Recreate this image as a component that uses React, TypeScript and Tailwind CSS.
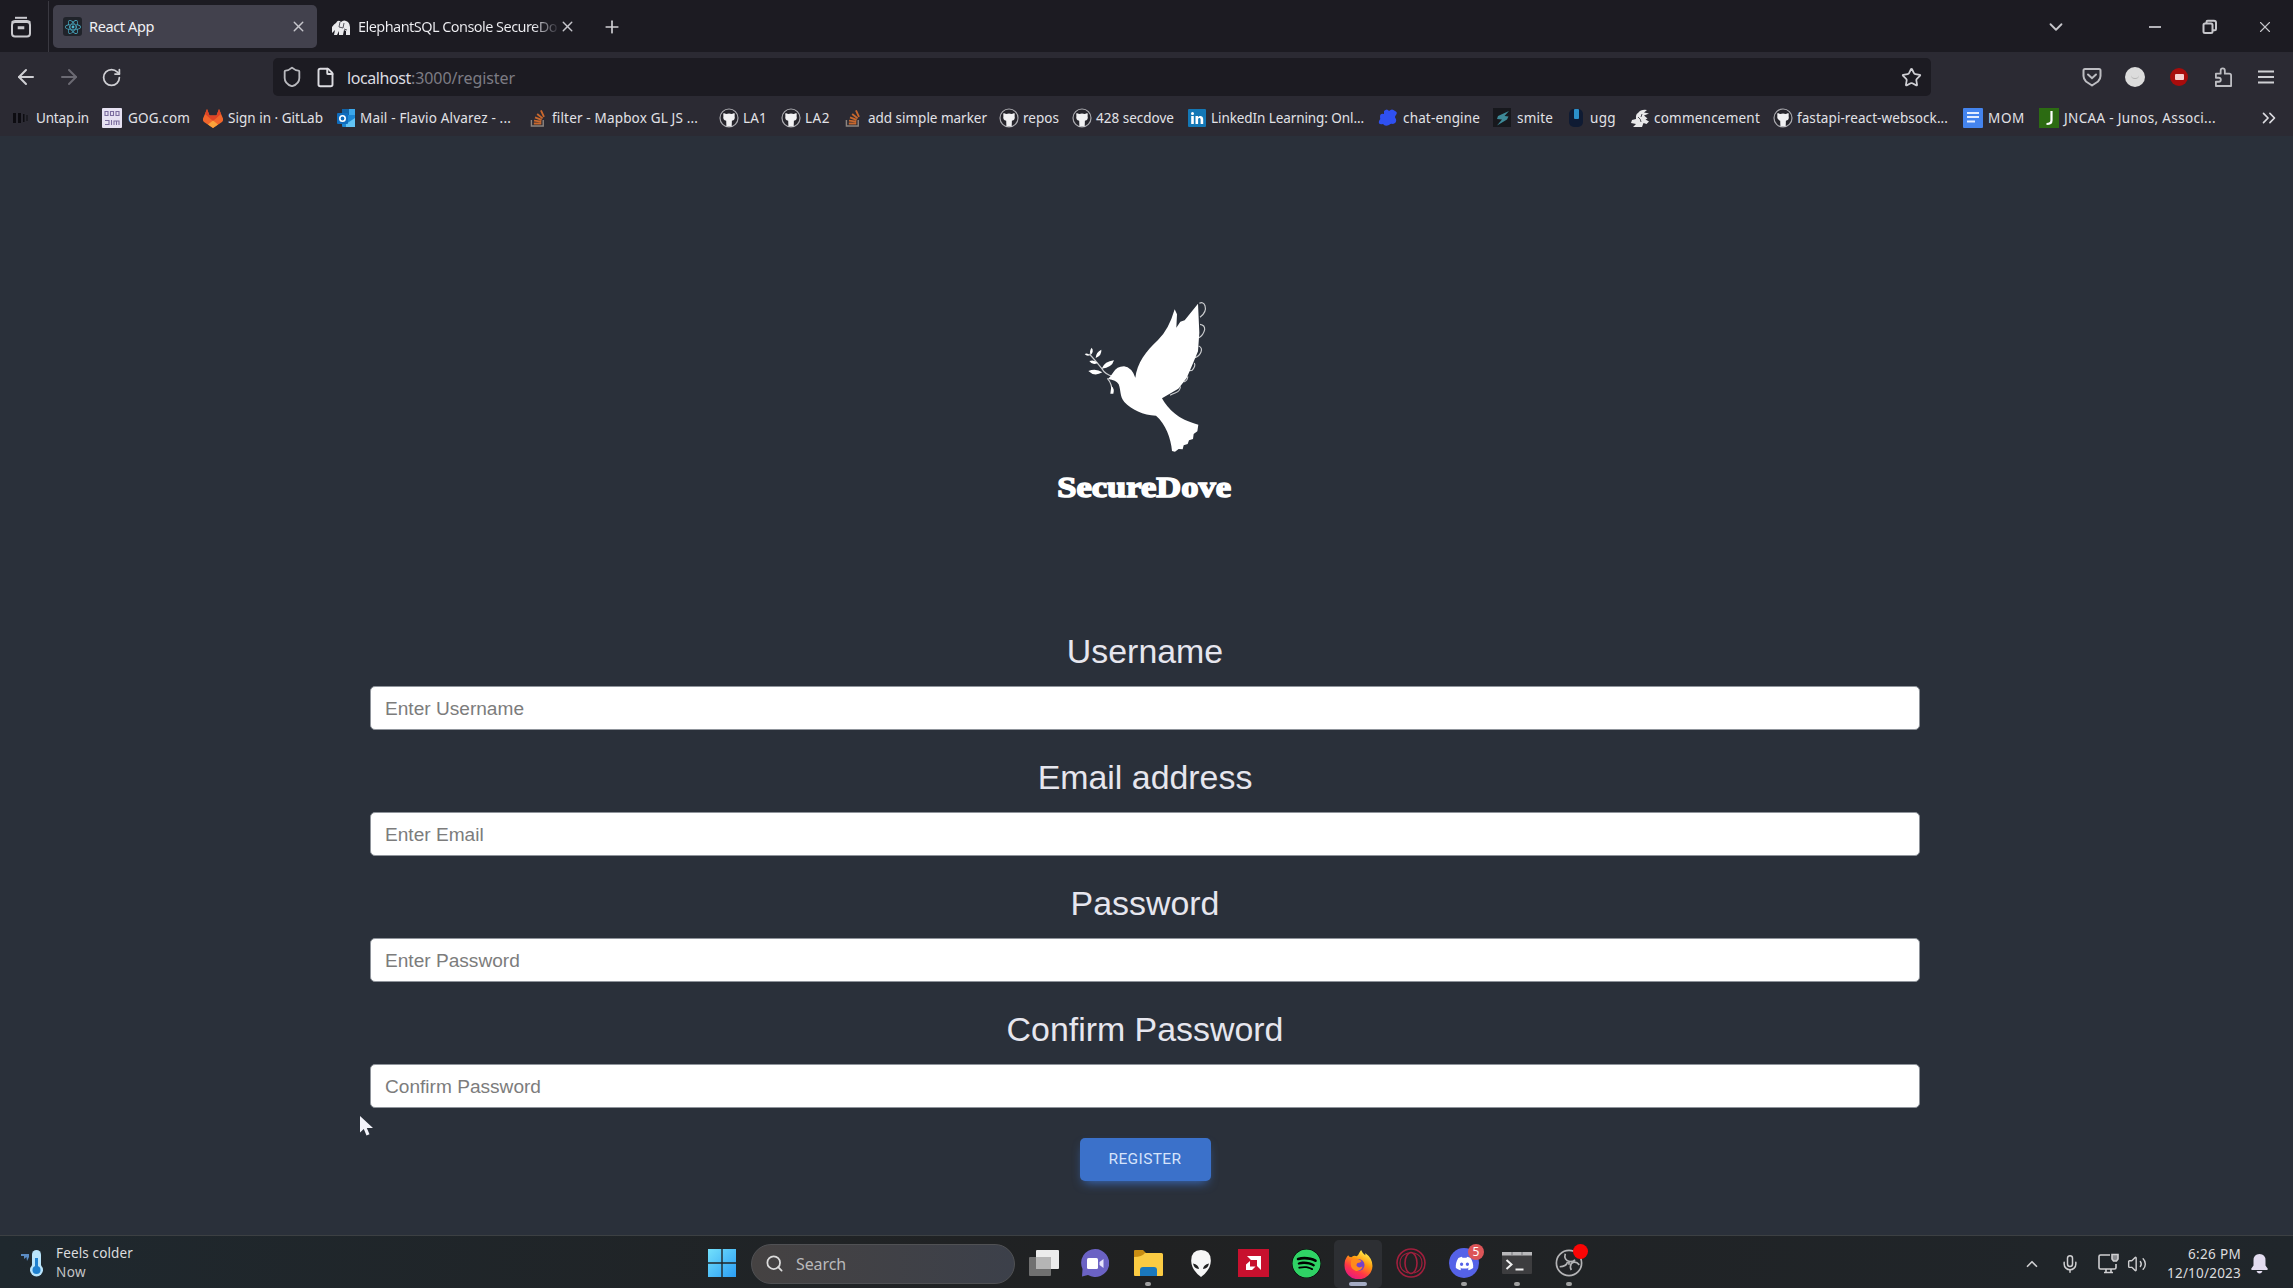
import React, { useLayoutEffect, useRef } from "react";
import { FaReact, FaSpotify, FaDiscord } from "react-icons/fa";
import { ArrowLeft, ArrowRight, RotateCw, Star, ChevronDown, ChevronUp, ChevronsRight, X, Plus, Search, Mic, Volume2, Shield, File } from "lucide-react";

/** Single line of text whose tracking is adjusted so that it spans `w` pixels. */
function Fit({ w, children, className = "" }: { w: number; children: string; className?: string }) {
  const ref = useRef<HTMLSpanElement>(null);
  useLayoutEffect(() => {
    const el = ref.current;
    if (!el) return;
    el.style.letterSpacing = "0px";
    const natural = el.getBoundingClientRect().width;
    el.style.letterSpacing = `${(w - natural) / children.length}px`;
  }, [w, children]);
  return (
    <span ref={ref} className={`inline-block shrink-0 whitespace-pre ${className}`}>
      {children}
    </span>
  );
}

const Github = () => (
  <svg viewBox="0 0 20 20" className="size-5">
    <circle cx="10" cy="10" r="9" fill="#26252c" stroke="#a9a9ae" strokeWidth="1.2" />
    <path d="M4.6 5l2.6.9q2.800-.7 5.600 0L15.400 5q.6 1.600.2 2.900 1 3.900-2.700 4.900l-.2 5.800H7.400l-.2-5.800q-3.700-1-2.800-4.900-.4-1.300.2-2.900z" fill="#f1f1f3" />
  </svg>
);
const Gitlab = () => (
  <svg viewBox="0 0 20 20" className="size-5">
    <path d="M4 1l2.500 6.500h7L16 1l4 9.500q.5 2-1 3.500l-9 6-9-6q-1.500-1.500-1-3.500z" fill="#f0652b" />
    <path d="M4 1l2.500 6.500h7L16 1l2 5-8 7-8-7z" fill="#dc4326" />
    <path d="M10 12.500l5 4-5 3.500-5-3.500z" fill="#fba33a" />
  </svg>
);
const Stack = () => (
  <svg viewBox="0 0 18 20" className="h-5 w-[17px]" fill="none">
    <path d="M1.500 12v6.500h12.500V12" stroke="#8d8580" strokeWidth="1.500" />
    <path d="M4 15.800h8M4.200 12.800l7.800 1M5.300 9.300l7 2.800M7.600 5.700l5.800 4.700M11.600 2l3.200 6.800" stroke="#c9682e" strokeWidth="2" />
  </svg>
);
const Untap = () => (
  <svg viewBox="0 0 18 20" className="h-5 w-[18px]">
    <path d="M1 5h3v10H1zM6 5h3v10H6zM11 6h1.500v8H11zM14.500 7h1v6h-1z" fill="#0d0c11" />
  </svg>
);
const Gog = () => (
  <svg viewBox="0 0 20 20" className="size-5">
    <rect width="20" height="20" rx="1" fill="#e6e1f2" />
    <path d="M3 3.500h3v4H3zM8.500 3.500h3v4h-3zM14 3.500h3v4h-3zM3 12.500h4v4H3M9.500 12v5M12 17v-4h5v4M14.500 13v4" fill="none" stroke="#7a6c9e" strokeWidth="1.100" />
  </svg>
);
const Outlook = () => (
  <svg viewBox="0 0 19 20" className="h-5 w-[19px]">
    <rect x="5" y="1" width="13" height="18" rx="1" fill="#1b86d3" />
    <path d="M5 1h7v6H5z" fill="#1163a8" />
    <path d="M12 1h6v6h-6z" fill="#3ba7ea" />
    <path d="M18 10l-9 6v3h9z" fill="#62c4f5" />
    <rect y="5" width="11" height="11" rx="1" fill="#0f6cbd" />
    <circle cx="5.500" cy="10.500" r="2.700" fill="none" stroke="#fff" strokeWidth="1.600" />
  </svg>
);
const Linkedin = () => (
  <svg viewBox="0 0 18 18" className="size-[18px]">
    <rect width="18" height="18" rx="1" fill="#1377b5" />
    <circle cx="4.500" cy="4.500" r="1.500" fill="#fff" />
    <path d="M3.200 7h2.600v8H3.200zM7.500 7H10v1.200c1.500-2.200 5.200-1.700 5.200 1.900V15h-2.600v-4.400c0-2-2.500-2-2.500 0V15H7.500z" fill="#fff" />
  </svg>
);
const ChatEngine = () => (
  <svg viewBox="0 0 20 20" className="size-5">
    <path d="M6 3q3-3 5 0 3-3 6 0 3 1 1 4-2 2 0 4 1 4-3 5-2-1-4 1-4 2-6-1-5 1-4-3 2-2 1-4 0-4 4-3z" fill="#2f50f0" />
  </svg>
);
const Smite = () => (
  <svg viewBox="0 0 18 20" className="h-5 w-[18px]">
    <rect width="18" height="19" fill="#17181d" />
    <path d="M16 3L5 8l-1 3 5 .5-5 6 10-6 1.500-3-4-.5z" fill="#3e8a98" />
  </svg>
);
const Ugg = () => (
  <svg viewBox="0 0 16 20" className="h-5 w-4">
    <rect x="1" y="1" width="14" height="18" rx="5" fill="#0f1b33" />
    <rect x="6" y="1" width="5" height="10" rx="1" fill="#2b8fc9" />
  </svg>
);
const Horse = () => (
  <svg viewBox="0 0 20 20" className="size-5">
    <path d="M8 5q3-4 9-3l-3 2.500 5 1-5 2 3.500 3-2 1 3.500 2-2.500 2.500-3-1-1.500 4H3l3-3-5-1 1-3 4-1q-.500-5 2-6z" fill="#e8e8ea" />
    <path d="M8 9q3 2 3 5M12 6l-1 3" stroke="#4b4a52" fill="none" />
  </svg>
);
const Docs = () => (
  <svg viewBox="0 0 20 20" className="size-5">
    <rect width="20" height="20" rx="1" fill="#4484ee" />
    <path d="M4 5h12M4 9h12M4 13.500h8" stroke="#e4edff" strokeWidth="2" />
  </svg>
);
const Juniper = () => (
  <svg viewBox="0 0 20 20" className="size-5">
    <rect width="20" height="20" fill="#2c6b12" />
    <path d="M12.500 3v9.500q0 3.500-5 3.500" fill="none" stroke="#fff" strokeWidth="2.200" />
  </svg>
);

const BOOKMARKS: { label: string; slot: string; lead: string; w: number; Icon: React.FC }[] = [
  { label: "Untap.in", slot: "w-[90px]", lead: "w-6", w: 53, Icon: Untap },
  { label: "GOG.com", slot: "w-[101px]", lead: "w-[26px]", w: 62, Icon: Gog },
  { label: "Sign in · GitLab", slot: "w-[134px]", lead: "w-[25px]", w: 95, Icon: Gitlab },
  { label: "Mail - Flavio Alvarez - ...", slot: "w-[193px]", lead: "w-[23px]", w: 151, Icon: Outlook },
  { label: "filter - Mapbox GL JS ...", slot: "w-[189px]", lead: "w-[22px]", w: 146, Icon: Stack },
  { label: "LA1", slot: "w-[62px]", lead: "w-6", w: 24, Icon: Github },
  { label: "LA2", slot: "w-16", lead: "w-6", w: 25, Icon: Github },
  { label: "add simple marker", slot: "w-[154px]", lead: "w-[23px]", w: 119, Icon: Stack },
  { label: "repos", slot: "w-[73px]", lead: "w-6", w: 36, Icon: Github },
  { label: "428 secdove", slot: "w-[116px]", lead: "w-6", w: 78, Icon: Github },
  { label: "LinkedIn Learning: Onl...", slot: "w-[190px]", lead: "w-[23px]", w: 153, Icon: Linkedin },
  { label: "chat-engine", slot: "w-[115px]", lead: "w-[25px]", w: 77, Icon: ChatEngine },
  { label: "smite", slot: "w-[75px]", lead: "w-6", w: 36, Icon: Smite },
  { label: "ugg", slot: "w-[62px]", lead: "w-[22px]", w: 26, Icon: Ugg },
  { label: "commencement", slot: "w-[143px]", lead: "w-6", w: 106, Icon: Horse },
  { label: "fastapi-react-websock...", slot: "w-[190px]", lead: "w-6", w: 151, Icon: Github },
  { label: "MOM", slot: "w-[76px]", lead: "w-[25px]", w: 37, Icon: Docs },
  { label: "JNCAA - Junos, Associ...", slot: "w-[219px]", lead: "w-[25px]", w: 152, Icon: Juniper },
];

function TabStrip() {
  return (
    <div className="flex h-[52px] items-center bg-[#1c1b22] pt-px text-[14.5px] text-[#f0f0f4]">
      <div className="flex h-full w-[49px] items-center border-r border-[#3a3941] pl-[10px]">
        <svg viewBox="0 0 22 22" className="size-[22px]" fill="none" stroke="#c9c9ce" strokeWidth="2">
          <path d="M5 1.800h12" />
          <rect x="2" y="6" width="18" height="14.500" rx="3" />
          <path d="M1.500 6.500Q3 4.800 5 4.800h12q2 0 3.500 1.700M8.500 11h5v1.500h-5z" strokeWidth="1.600" />
        </svg>
      </div>
      <div className="ml-1 flex h-[43px] w-[264px] items-center rounded-[5px] bg-[#42414d] pl-[10px]">
        <span className="flex size-[19px] items-center justify-center rounded-[3px] bg-[#20232a]">
          <FaReact className="size-4 text-[#4bb4cd]" />
        </span>
        <Fit w={65} className="ml-[7px]">React App</Fit>
        <X className="ml-auto mr-[10px] size-[17px] text-[#c6c6cc]" strokeWidth={2} />
      </div>
      <div className="ml-[14px] flex w-[246px] items-center">
        <svg viewBox="0 0 20 18" className="h-[18px] w-5" fill="#e9e9ec">
          <path d="M1 9q2-3 4-4 2-4 5-1 3-3 7 0 2 2 2 5v8h-4v-4l-2-1-1 5H8v-4l-2 4H3l1-5-3 3z" />
          <path d="M9 4l-1 5 4 1 1-5M13 11l3 1" fill="none" stroke="#55545c" />
        </svg>
        <Fit w={199} className="ml-[7px] bg-linear-to-r from-[#f0f0f4] from-88% to-[#34333c] bg-clip-text text-transparent">ElephantSQL Console SecureDo</Fit>
        <X className="ml-[2px] size-[17px] shrink-0 text-[#c6c6cc]" strokeWidth={2} />
      </div>
      <Plus className="ml-[25px] size-[20px] text-[#d0d0d4]" strokeWidth={2} />
      <div className="ml-auto flex items-center text-[#c6c6cb]">
        <ChevronDown className="mr-[81px] size-[22px]" strokeWidth={2} />
        <svg viewBox="0 0 14 14" className="mr-[40px] size-[14px]" stroke="currentColor" strokeWidth="1.800"><path d="M1 7h12" /></svg>
        <svg viewBox="0 0 16 16" className="mr-[38px] size-4" fill="none" stroke="currentColor" strokeWidth="2">
          <rect x="1.500" y="4.500" width="9" height="9.500" rx="1.500" />
          <path d="M4.500 4V3q0-1.200 1.200-1.200H12q2 0 2 2V10q0 1.200-1.200 1.200H11" />
        </svg>
        <X className="mr-[19px] size-[18px]" strokeWidth={1.500} />
      </div>
    </div>
  );
}

function NavBar() {
  return (
    <div className="flex h-[50px] items-center bg-[#2b2a33] pl-[14px] text-[#cfcfd4]">
      <ArrowLeft className="size-6" strokeWidth={2} />
      <ArrowRight className="ml-[19px] size-6 text-[#6b6a73]" strokeWidth={2} />
      <RotateCw className="ml-5 size-[21px]" strokeWidth={2} />
      <div className="ml-[151px] flex h-[38px] w-[1658px] items-center rounded-[5px] bg-[#1c1b22] pl-2">
        <Shield className="size-[22px] text-[#b9b9be]" strokeWidth={2} />
        <File className="ml-3 size-[21px] text-[#dcdce1]" strokeWidth={2.200} />
        <Fit w={64} className="ml-[11px] pt-[2px] text-[16px] text-[#dcdce1]">localhost</Fit>
        <Fit w={104} className="pt-[2px] text-[16px] text-[#7c7b84]">:3000/register</Fit>
        <Star className="ml-auto mr-[9px] size-[21px]" strokeWidth={2} />
      </div>
      <svg viewBox="0 0 20 20" className="ml-[151px] size-5" fill="none" stroke="#bdbdc2" strokeWidth="2" strokeLinecap="round">
        <path d="M3 2h14q1.500 0 1.500 1.500V9q0 3-2.500 5.500L10 18.500 4 14.500Q1.500 12 1.500 9V3.500Q1.500 2 3 2z" strokeLinejoin="round" />
        <path d="M6 7.500l4 3.700 4-3.700" />
      </svg>
      <span className="ml-[23px] flex size-5 items-center justify-center rounded-full bg-[#dcdcdc]">
        <span className="h-1 w-2 rounded-b-full border-b border-[#b5b5b5]" />
      </span>
      <span className="ml-[25px] flex size-[18px] items-center justify-center rounded-full bg-[#a80c0c]">
        <span className="h-[6px] w-[9px] rounded-[1px] bg-[#f7cfcf]" />
      </span>
      <svg viewBox="0 0 20 22" className="ml-[26px] h-[22px] w-[19px]" fill="none" stroke="#bdbdc2" strokeWidth="1.900" strokeLinejoin="round">
        <path d="M2 7.500h5V4.500Q7 2 9.200 2t2.200 2.500v3H16q2 0 2 2V20.500H2v-4.500h3q2.200 0 2.200-2.100T5 11.800H2z" />
      </svg>
      <svg viewBox="0 0 16 14" className="ml-[25px] h-[14px] w-4" stroke="#cfcfd4" strokeWidth="1.800"><path d="M0 1.500h16M0 7h16M0 12.500h16" /></svg>
    </div>
  );
}

function Bookmarks() {
  return (
    <div className="flex h-[34px] items-center bg-[#2b2a33] pb-[2px] pl-3 text-[13.500px] text-[#e2e2e7]">
      {BOOKMARKS.map(({ label, slot, lead, w, Icon }) => (
        <div key={label} className={`flex shrink-0 items-center ${slot}`}>
          <span className={`flex shrink-0 items-center ${lead}`}><Icon /></span>
          <Fit w={w}>{label}</Fit>
        </div>
      ))}
      <ChevronsRight className="size-[22px] text-[#dcdce1]" strokeWidth={1.800} />
    </div>
  );
}

function Logo() {
  return (
    <svg viewBox="0 0 630 720" className="h-[240px] w-[210px]" fill="#fff">
      <path d="M204 297Q214 287 220 277Q230 259 252 259Q275 262 286 293C291 250 318 213 354 180Q386 150 404 88L411 103L409 143L421 125L434 121L474 71L478 158L474 214L459 250L440 294L415 326L366 355C384 386 412 418 475 434L472 454L461 462L459 477L447 481L443 492L431 496L428 508L416 507L405 515L396 513C393 476 377 431 348 407C310 406 274 389 253 366C239 350 243 331 236 313Q228 300 204 297Z" />
      <g fill="none" stroke="#fff" strokeOpacity=".75" strokeWidth="3.500">
        <path d="M478 70Q490 64 495 77Q501 96 480 112M480 133Q495 135 494 149Q490 166 477 173M476 198Q488 203 483 216Q478 229 465 233M463 249Q468 258 456 271L447 272M443 289Q444 301 431 306M421 319Q422 332 407 338Q397 342 390 346" />
        <path d="M219 289Q196 284 185 265Q164 239 148 222M202 295Q217 312 216 337" />
      </g>
      <path d="M185 266Q194 244 222 241Q216 263 185 266ZM187 277Q163 291 145 273Q168 264 187 277ZM173 249Q157 257 148 243Q163 238 173 249ZM167 234Q168 216 184 209Q186 226 167 234ZM152 225Q147 213 155 203Q163 214 152 225ZM150 226Q139 229 134 222Q142 217 150 226ZM214 318Q225 327 220 341L211 341Z" />
      <text x="52" y="651" textLength="521" lengthAdjust="spacingAndGlyphs" stroke="#fff" strokeWidth="4.500" className="font-['Liberation_Serif',serif] text-[88px] font-bold">SecureDove</text>
    </svg>
  );
}

const FIELDS = [
  { label: "Username", hint: "Enter Username" },
  { label: "Email address", hint: "Enter Email" },
  { label: "Password", hint: "Enter Password" },
  { label: "Confirm Password", hint: "Confirm Password" },
];

function RegisterPage() {
  return (
    <main className="relative flex h-[1099px] flex-col items-center bg-[#2a303a] pr-[3px] pt-[144px] font-['Liberation_Sans',sans-serif]">
      <Logo />
      <form className="mt-[106px] flex w-[1550px] flex-col items-center">
        {FIELDS.map((f) => (
          <label key={f.label} className="mb-[22px] flex w-full flex-col gap-[10px] text-center">
            <span className="h-[50px] text-[33.900px] leading-[50px] text-[#e6e6ee]">{f.label}</span>
            <input
              placeholder={f.hint}
              className="h-11 w-full rounded-[5px] border border-[#8f949b] bg-white px-[14px] pt-px text-[19.100px] placeholder:text-[#7c7c7c] placeholder:opacity-100"
            />
          </label>
        ))}
        <button type="button" className="mt-[8px] flex h-[43px] w-[131px] items-center justify-center rounded-[5px] bg-[#3b71ca] pt-px font-['Roboto',sans-serif] text-[15.500px] text-[#d5e3fb] shadow-[0_5px_11px_-4px_#3b71ca]">
          <Fit w={73}>REGISTER</Fit>
        </button>
      </form>
      <svg viewBox="0 0 14 20" className="absolute left-[360px] top-[980px] h-5 w-[14px]">
        <path d="M0 0v16.500l3.800-3.500 2.700 6.500 3-1.300-2.700-6.200H13z" fill="#f4f4fb" />
      </svg>
    </main>
  );
}

const Slot = ({ w, children, dot }: { w: string; children: React.ReactNode; dot?: boolean }) => (
  <div className={`relative flex h-full shrink-0 items-center justify-center pb-[2px] pt-[4px] ${w}`}>
    {children}
    {dot && <span className="absolute bottom-[2px] h-1 w-[6px] rounded-full bg-[#a0a0a0]" />}
  </div>
);

const Firefox = () => (
  <svg viewBox="0 0 28 28" className="size-[29px]">
    <defs>
      <linearGradient id="flame" x1=".8" y1="0" x2=".25" y2="1">
        <stop offset=".05" stopColor="#fff44f" />
        <stop offset=".4" stopColor="#ff980e" />
        <stop offset=".7" stopColor="#ff3647" />
        <stop offset="1" stopColor="#e31587" />
      </linearGradient>
    </defs>
    <path d="M4 5q1 2 3 2 3-2 5-1l1.500-1Q15 2 16.500 0q1.500 3.500 4 5 .2-1.500 0-2 7 5 7 12.500A13.500 13 0 0 1 .5 15Q.3 9 4 5z" fill="url(#flame)" />
    <circle cx="14" cy="14.500" r="5.800" fill="#7542c9" />
    <path d="M7 10q3-3 7-1l3 1.500q-1 2-4 2-1 1-1 2.500 2 3 6 1-2 5-7 4-6-2-4-10z" fill="#ff8a1c" />
  </svg>
);

function Taskbar() {
  return (
    <footer className="flex h-[53px] items-center border-t border-[#3c4043] bg-linear-to-r from-[#1f282e] via-[#202122] to-[#20262b] text-[#dcdcde]">
      <div className="flex w-[701px] items-center pl-5 pt-[2px]">
        <svg viewBox="0 0 26 28" className="h-7 w-[26px]">
          <path d="M1 5h8v3L7 12l-.5-4L4 10V7H1z" fill="#5b8cc4" />
          <rect x="12" y="1" width="9" height="20" rx="4.500" fill="#b9e4fb" />
          <circle cx="16.500" cy="21" r="6.500" fill="#b9e4fb" />
          <circle cx="16.500" cy="21" r="4" fill="#1f80cf" />
          <path d="M16.500 9v12" stroke="#1f80cf" strokeWidth="3" />
        </svg>
        <div className="ml-[10px] flex flex-col text-[13.500px] leading-[19px]">
          <Fit w={77}>Feels colder</Fit>
          <Fit w={30} className="self-start text-[#c4c4c6]">Now</Fit>
        </div>
      </div>
      <Slot w="w-[42px]">
        <svg viewBox="0 0 28 28" className="size-7">
          <defs>
            <linearGradient id="win" x1="0" y1="0" x2="1" y2="1"><stop stopColor="#73e0fb" /><stop offset="1" stopColor="#2a9df4" /></linearGradient>
          </defs>
          <path d="M0 0h13.300v13.300H0zM14.700 0H28v13.300H14.700zM0 14.700h13.300V28H0zM14.700 14.700H28V28H14.700z" fill="url(#win)" />
        </svg>
      </Slot>
      <div className="ml-2 mt-[3px] flex h-10 w-[264px] shrink-0 items-center rounded-full border border-[#505154] bg-linear-to-r from-[#454242] to-[#3c404a] pl-[13px]">
        <Search className="size-[19px] text-[#dcdcdc]" strokeWidth={2.200} />
        <Fit w={50} className="ml-3 text-[16px] text-[#b9b9bb]">Search</Fit>
      </div>
      <Slot w="w-[57px]">
        <svg viewBox="0 0 30 28" className="ml-[1px] h-7 w-[30px]">
          <rect y="8" width="22" height="19" rx="1" fill="#707070" />
          <rect x="7" y="1" width="23" height="19" rx="1" fill="#ececec" />
          <rect x="7" y="8" width="15" height="12" fill="#b5b5b5" />
        </svg>
      </Slot>
      <Slot w="w-[46px]">
        <svg viewBox="0 0 28 28" className="size-7">
          <path d="M14 0a14 14 0 1 1-7 26l-6 1.500L1.500 20A14 14 0 0 1 14 0z" fill="#6b62c4" />
          <rect x="6" y="9" width="11" height="11" rx="1.500" fill="#fff" />
          <path d="M18.500 13l4-3v9l-4-3z" fill="#e6e4fb" />
        </svg>
      </Slot>
      <Slot w="w-[60px]" dot>
        <svg viewBox="0 0 29 28" className="h-7 w-[29px]">
          <path d="M0 2q0-1 1-1h8l3 3-2 5H0z" fill="#c98d12" />
          <path d="M0 8q8 0 11-4h16.500q1.500 0 1.500 1.500V26q0 1-1 1H1q-1 0-1-1z" fill="#fbcb43" />
          <path d="M6 27v-6q0-3 3-3h11q3 0 3 3v6z" fill="#1a78bd" />
        </svg>
      </Slot>
      <Slot w="w-[46px]">
        <svg viewBox="0 0 20 27" className="h-[27px] w-5">
          <path d="M10 0q10 0 9.800 11Q19.500 20 10 27 .5 20 .2 11 0 0 10 0z" fill="#f6f6f6" />
          <path d="M2 13.500q5.500 1 6 5.500Q3 18.500 2 13.500zM18 13.500q-5.500 1-6 5.500Q17 18.500 18 13.500z" fill="#202122" />
        </svg>
      </Slot>
      <Slot w="w-[58px]">
        <svg viewBox="0 0 31 28" className="ml-[1px] h-7 w-[31px]">
          <rect width="31" height="28" fill="#c8102e" />
          <path d="M9 7h14v14l-4-4v-6h-6z" fill="#fff" />
          <path d="M12 12v5.500h5.500L14 21H8v-5.500z" fill="#fff" />
        </svg>
      </Slot>
      <Slot w="w-[48px]"><FaSpotify className="size-[29px] rounded-full bg-black text-[#2fd265]" /></Slot>
      <div className="relative ml-1 flex h-[48px] w-12 shrink-0 items-center justify-center self-end rounded-[5px] bg-[#2d2f33]">
        <Firefox />
        <span className="absolute bottom-[2px] h-1 w-[18px] rounded-full bg-[#a5acc4]" />
      </div>
      <Slot w="w-[57px]">
        <svg viewBox="0 0 30 30" className="size-[30px]" fill="none" stroke="#a11f3d" strokeWidth="1.600">
          <circle cx="15" cy="15" r="14" />
          <ellipse cx="15" cy="15" rx="6" ry="10.500" />
          <path d="M18 5q8 2 8 10t-8 10M12 5Q4 7 4 15t8 10" strokeWidth="1.200" />
        </svg>
      </Slot>
      <Slot w="w-[50px]" dot>
        <span className="flex size-[30px] items-center justify-center rounded-full bg-[#5562e8]"><FaDiscord className="size-[19px] text-white" /></span>
        <span className="absolute left-[29px] top-[8px] flex size-4 items-center justify-center rounded-full bg-[#dc5558] text-[12px] leading-none text-white">5</span>
      </Slot>
      <Slot w="w-[55px]" dot>
        <svg viewBox="0 0 30 22" className="h-[22px] w-[30px]">
          <rect width="30" height="22" rx="1" fill="#3d3d3f" />
          <path d="M0 0h30v3.500H0z" fill="#b8b8ba" />
          <path d="M10 0v3.500M20 0v3.500" stroke="#77777a" />
          <path d="M4.500 8l5 4.500-5 4.500M13.500 17.500h8" stroke="#f0f0f0" strokeWidth="2" fill="none" />
        </svg>
      </Slot>
      <Slot w="w-[50px]" dot>
        <svg viewBox="0 0 30 30" className="size-[28px]" fill="none" stroke="#b4b4b6" strokeWidth="1.800">
          <circle cx="15" cy="15" r="13.500" fill="#222427" />
          <path d="M11 5q-2 7 5 8.500 4 0 5.500-2M26 17q-4-5-8.500-1.500-2 4 0 7M5 19q7 0 8.500-5M15 14v3" />
        </svg>
        <span className="absolute left-[29px] top-[8px] size-[15px] rounded-full bg-[#fa0505]" />
      </Slot>
      <div className="ml-auto flex items-center pr-[25px] pt-[3px] text-[#cfcfd1]">
        <ChevronUp className="mr-[19px] size-[18px]" strokeWidth={2.200} />
        <Mic className="mr-[18px] size-[20px]" strokeWidth={1.800} />
        <svg viewBox="0 0 21 21" className="mr-[8px] size-[21px]" fill="none" stroke="currentColor" strokeWidth="1.600">
          <path d="M12 2H2.500Q1 2 1 3.500v11Q1 16 2.500 16h14q1.500 0 1.500-1.500V11M6 19.500h9M8 16v3M13 16v3" />
          <path d="M14 1.500h6V6l-1.500 2h-3L14 6z" fill="#8a8c90" />
        </svg>
        <Volume2 className="size-5" strokeWidth={1.700} />
        <div className="ml-[20px] flex w-[74px] flex-col items-end text-[13.500px] leading-[19px] text-[#dcdcde]">
          <Fit w={53}>6:26 PM</Fit>
          <Fit w={74}>12/10/2023</Fit>
        </div>
        <svg viewBox="0 0 17 20" className="ml-[10px] h-5 w-[17px]" fill="#e3dcf0">
          <path d="M8.500 0q6 0 6 6.500v5l2.300 3.300q.2 1.200-1 1.200H1.200q-1.200 0-1-1.200l2.300-3.300v-5Q2.500 0 8.500 0zM5.500 17h6q-1 2.500-3 2.500t-3-2.500z" />
        </svg>
      </div>
    </footer>
  );
}

export default function App() {
  return (
    <div className="h-[1288px] w-[2293px] overflow-hidden bg-[#2a303a] font-['Noto_Sans',sans-serif]">
      <TabStrip />
      <NavBar />
      <Bookmarks />
      <RegisterPage />
      <Taskbar />
    </div>
  );
}
